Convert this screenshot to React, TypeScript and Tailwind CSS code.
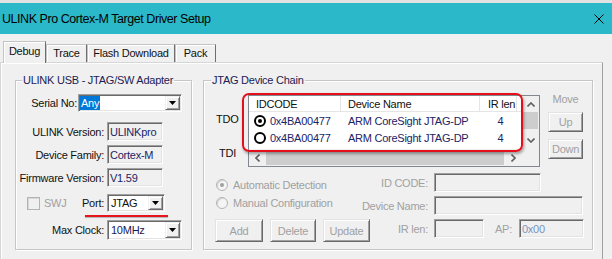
import React from "react";

type Kids = { children?: React.ReactNode };

function Tri() {
  return (
    <svg width="7" height="4" viewBox="0 0 7 4">
      <polygon points="0,0 7,0 3.5,4" fill="#000" />
    </svg>
  );
}

function Chevron({ dir }: { dir: "up" | "down" | "left" | "right" }) {
  const pts = {
    up: "0.5,4.5 4,1 7.5,4.5",
    down: "0.5,0.5 4,4 7.5,0.5",
    left: "4.5,0.5 1,4 4.5,7.5",
    right: "0.5,0.5 4,4 0.5,7.5",
  }[dir];
  const vertical = dir === "up" || dir === "down";
  return (
    <svg width={vertical ? 8 : 5} height={vertical ? 5 : 8} viewBox={vertical ? "0 0 8 5" : "0 0 5 8"}>
      <polyline points={pts} fill="none" stroke="#606060" strokeWidth="1.6" />
    </svg>
  );
}

function Combo({ size, children }: { size: string } & Kids) {
  return (
    <div
      className={`${size} flex bg-white border border-[#a0a0a0] border-b-white border-r-white shadow-[inset_1px_1px_0_#696969,inset_-1px_-1px_0_#e3e3e3] p-[1px]`}
    >
      <div className="flex-1 flex items-center overflow-hidden">{children}</div>
      <div className="w-[15px] flex items-center justify-center bg-[#f0f0f0] border border-[#f0f0f0] border-r-[#696969] border-b-[#696969] shadow-[inset_1px_1px_0_#fff,inset_-1px_-1px_0_#a0a0a0]">
        <Tri />
      </div>
    </div>
  );
}

function Field({ size, children }: { size: string } & Kids) {
  return (
    <div
      className={`${size} flex items-center bg-[#f0f0f0] border border-[#a0a0a0] border-b-white border-r-white shadow-[inset_1px_1px_0_#696969,inset_-1px_-1px_0_#e3e3e3] pl-[2px] text-[#1b2466]`}
    >
      {children}
    </div>
  );
}

function Btn({ size, children }: { size: string } & Kids) {
  return (
    <div
      className={`${size} flex items-center justify-center text-[#a0a0a0] bg-[#f0f0f0] border border-[#e3e3e3] border-r-[#696969] border-b-[#696969] shadow-[inset_1px_1px_0_#fff,inset_-1px_-1px_0_#a0a0a0]`}
    >
      {children}
    </div>
  );
}

function GrayRadio({ on }: { on?: boolean }) {
  return (
    <div className="w-[12px] h-[12px] rounded-full border border-[#b4b4b4] bg-[#f4f4f4] shadow-[inset_1px_1px_0_#d4d4d4] flex items-center justify-center">
      {on && <div className="w-[4px] h-[4px] rounded-full bg-[#a0a0a0]" />}
    </div>
  );
}

function ListRadio({ on }: { on?: boolean }) {
  return (
    <div className="w-[12px] h-[12px] rounded-full border-2 border-black bg-white flex items-center justify-center">
      {on && <div className="w-[4px] h-[4px] rounded-full bg-black" />}
    </div>
  );
}

function Tab({ size, children, active }: { size: string; active?: boolean } & Kids) {
  return (
    <div
      className={`${size} flex justify-center border border-b-0 border-[#c4c4c4] border-r-[#6e6e6e] bg-[#f0f0f0] shadow-[inset_1px_1px_0_#fff] ${
        active ? "relative z-10 -mb-[1px] pt-[2px]" : "pt-[1px]"
      }`}
    >
      {children}
    </div>
  );
}

function ChainRow({ on }: { on?: boolean }) {
  return (
    <div className="h-[17px] flex items-center text-[#1b2466]">
      <div className="w-[92px] flex items-center pl-[5px]">
        <ListRadio on={on} />
        <span className="ml-[4px]">0x4BA00477</span>
      </div>
      <div className="w-[139px] pl-[7px]">ARM CoreSight JTAG-DP</div>
      <div className="w-[41px] text-center">4</div>
    </div>
  );
}

export default function App() {
  return (
    <div className="w-[612px] h-[259px] overflow-hidden bg-[#f0f0f0] font-['Liberation_Sans',Arial,sans-serif] text-[11px] leading-[14px] tracking-[-0.25px] text-[#111]">
      {/* Title bar */}
      <div className="h-[3px] bg-[#e2e2e2]" />
      <div className="h-[31px] bg-[#2bb8c9] flex items-center justify-between pl-[2px] pr-[8px]">
        <span className="text-[12.5px] tracking-[-0.45px] text-black">ULINK Pro Cortex-M Target Driver Setup</span>
        <svg width="10" height="10" viewBox="0 0 10 10">
          <path d="M0.5 0.5L9.5 9.5M9.5 0.5L0.5 9.5" stroke="#000" strokeWidth="1" />
        </svg>
      </div>

      {/* Tabs */}
      <div className="h-[28px] flex items-end pl-[3px]">
        <Tab size="w-[43px] h-[22px]" active>
          Debug
        </Tab>
        <Tab size="w-[41px] h-[18px]">Trace</Tab>
        <Tab size="w-[88px] h-[18px]">Flash Download</Tab>
        <Tab size="w-[41px] h-[18px]">Pack</Tab>
      </div>

      {/* Tab panel */}
      <div className="w-[603px] h-[197px] border-t border-l border-r border-[#d6d6d6] border-r-[#a0a0a0] shadow-[inset_1px_1px_0_#fff] flex gap-[11px] pl-[14px] pt-[17px]">
        {/* ULINK USB group */}
        <div className="relative w-[177px] h-[170px] border border-[#c6c6c6] shadow-[inset_1px_1px_0_#fff,1px_1px_0_#fff]">
          <div className="-mt-[8px] ml-[6px] px-[1px] w-fit bg-[#f0f0f0] text-[#1b1b55]">ULINK USB - JTAG/SW Adapter</div>

          <div className="mt-[7px] h-[18px] flex items-center">
            <div className="w-[61px] text-right">Serial No:</div>
            <Combo size="ml-[1px] w-[104px] h-[18px]">
              <span className="bg-[#0078d7] text-white px-[1px]">Any</span>
            </Combo>
          </div>

          <div className="mt-[10px] h-[19px] flex items-center">
            <div className="w-[88px] text-right">ULINK Version:</div>
            <Field size="ml-[3px] w-[56px] h-[19px]">ULINKpro</Field>
          </div>
          <div className="mt-[4px] h-[19px] flex items-center">
            <div className="w-[88px] text-right">Device Family:</div>
            <Field size="ml-[3px] w-[56px] h-[19px]">Cortex-M</Field>
          </div>
          <div className="mt-[4px] h-[19px] flex items-center">
            <div className="w-[88px] text-right">Firmware Version:</div>
            <Field size="ml-[3px] w-[56px] h-[19px]">V1.59</Field>
          </div>

          <div className="mt-[7px] h-[18px] flex items-center">
            <div className="w-[88px] flex items-center">
              <div className="ml-[11px] w-[13px] h-[13px] border border-[#b4b4b4] bg-[#f0f0f0] shadow-[inset_1px_1px_0_#d8d8d8]" />
              <span className="ml-[4px] text-[#a0a0a0]">SWJ</span>
              <span className="ml-auto">Port:</span>
            </div>
            <Combo size="ml-[3px] w-[58px] h-[18px]">
              <span className="pl-[2px]">JTAG</span>
            </Combo>
          </div>

          <div className="mt-[8px] h-[20px] flex items-center">
            <div className="w-[88px] text-right">Max Clock:</div>
            <Combo size="ml-[3px] w-[75px] h-[20px]">
              <span className="pl-[2px] text-[#1b1b55]">10MHz</span>
            </Combo>
          </div>

          {/* annotation underline */}
          <div className="absolute left-[69px] top-[134px] w-[83px] h-[2px] bg-[#e8141c] shadow-[0_1px_1px_rgba(0,0,0,0.25)]" />
        </div>

        {/* JTAG Device Chain group */}
        <div className="relative w-[390px] h-[170px] border border-[#c6c6c6] shadow-[inset_1px_1px_0_#fff,1px_1px_0_#fff]">
          <div className="-mt-[8px] ml-[7px] px-[1px] w-fit bg-[#f0f0f0] text-[#1b1b55]">JTAG Device Chain</div>

          <div className="mt-[5px] flex">
            <div className="w-[44px] flex flex-col">
              <span className="mt-[20px] ml-[12px]">TDO</span>
              <span className="mt-[20px] ml-[15px]">TDI</span>
            </div>

            {/* list view */}
            <div className="mt-[3px] w-[292px] h-[72px] border border-[#828790] bg-white flex">
              <div className="w-[273px] flex flex-col">
                <div className="h-[16px] flex border-b border-[#e5e5e5]">
                  <div className="w-[92px] pl-[7px] border-r border-[#e5e5e5] flex items-center">IDCODE</div>
                  <div className="w-[139px] pl-[7px] border-r border-[#e5e5e5] flex items-center">Device Name</div>
                  <div className="w-[37px] pl-[8px] border-r border-[#e5e5e5] flex items-center">IR len</div>
                </div>
                <ChainRow on />
                <ChainRow />
                <div className="flex-1" />
                <div className="h-[17px] flex bg-[#f0f0f0]">
                  <div className="w-[17px] flex items-center justify-center">
                    <Chevron dir="left" />
                  </div>
                  <div className="w-[238px] my-[1px] bg-[#cdcdcd]" />
                  <div className="flex-1" />
                  <div className="w-[17px] flex items-center justify-center">
                    <Chevron dir="right" />
                  </div>
                </div>
              </div>
              <div className="w-[17px] flex flex-col bg-[#f0f0f0]">
                <div className="h-[16px] flex items-center justify-center">
                  <Chevron dir="up" />
                </div>
                <div className="h-[17px] mx-[1px] bg-[#cdcdcd]" />
                <div className="flex-1" />
                <div className="h-[17px] flex items-center justify-center">
                  <Chevron dir="down" />
                </div>
                <div className="h-[17px]" />
              </div>
            </div>

            <div className="ml-[8px] w-[35px] flex flex-col items-center">
              <span className="text-[#a0a0a0]">Move</span>
              <Btn size="mt-[6px] w-[35px] h-[20px]">Up</Btn>
              <Btn size="mt-[7px] w-[35px] h-[20px]">Down</Btn>
            </div>
          </div>

          {/* bottom area */}
          <div className="mt-[6px] h-[19px] flex">
            <div className="w-[136px] flex items-center pt-[5px] pl-[12px] text-[#a0a0a0]">
              <GrayRadio on />
              <span className="ml-[5px]">Automatic Detection</span>
            </div>
            <div className="w-[88px] text-right self-center text-[#a0a0a0]">ID CODE:</div>
            <Field size="ml-[6px] w-[107px] h-[19px]" />
          </div>
          <div className="mt-[4px] h-[19px] flex">
            <div className="w-[136px] flex items-center pb-[5px] pl-[12px] text-[#a0a0a0]">
              <GrayRadio />
              <span className="ml-[5px]">Manual Configuration</span>
            </div>
            <div className="w-[88px] text-right self-center text-[#a0a0a0]">Device Name:</div>
            <Field size="ml-[6px] w-[149px] h-[19px]" />
          </div>
          <div className="mt-[4px] h-[23px] flex items-start">
            <div className="w-[166px] flex pl-[11px] gap-[7px]">
              <Btn size="w-[48px] h-[23px]">Add</Btn>
              <Btn size="w-[46px] h-[23px]">Delete</Btn>
              <Btn size="w-[47px] h-[23px]">Update</Btn>
            </div>
            <div className="w-[58px] h-[19px] flex items-center justify-end text-[#a0a0a0]">IR len:</div>
            <Field size="ml-[6px] w-[50px] h-[19px]" />
            <div className="ml-[11px] h-[19px] flex items-center text-[#a0a0a0]">AP:</div>
            <div className="flex-1 flex justify-end pr-[8px]">
              <div className="w-[65px] h-[19px] flex items-center bg-[#f0f0f0] border border-[#a0a0a0] border-b-white border-r-white shadow-[inset_1px_1px_0_#696969,inset_-1px_-1px_0_#e3e3e3] pl-[2px] text-[#7b93c0]">
                0x00
              </div>
            </div>
          </div>

          {/* annotation box */}
          <div className="absolute left-[38px] top-[12px] w-[281px] h-[59px] border-2 border-[#e3101a] rounded-[7px] shadow-[1px_2px_3px_rgba(0,0,0,0.35)]" />
        </div>
      </div>
    </div>
  );
}
